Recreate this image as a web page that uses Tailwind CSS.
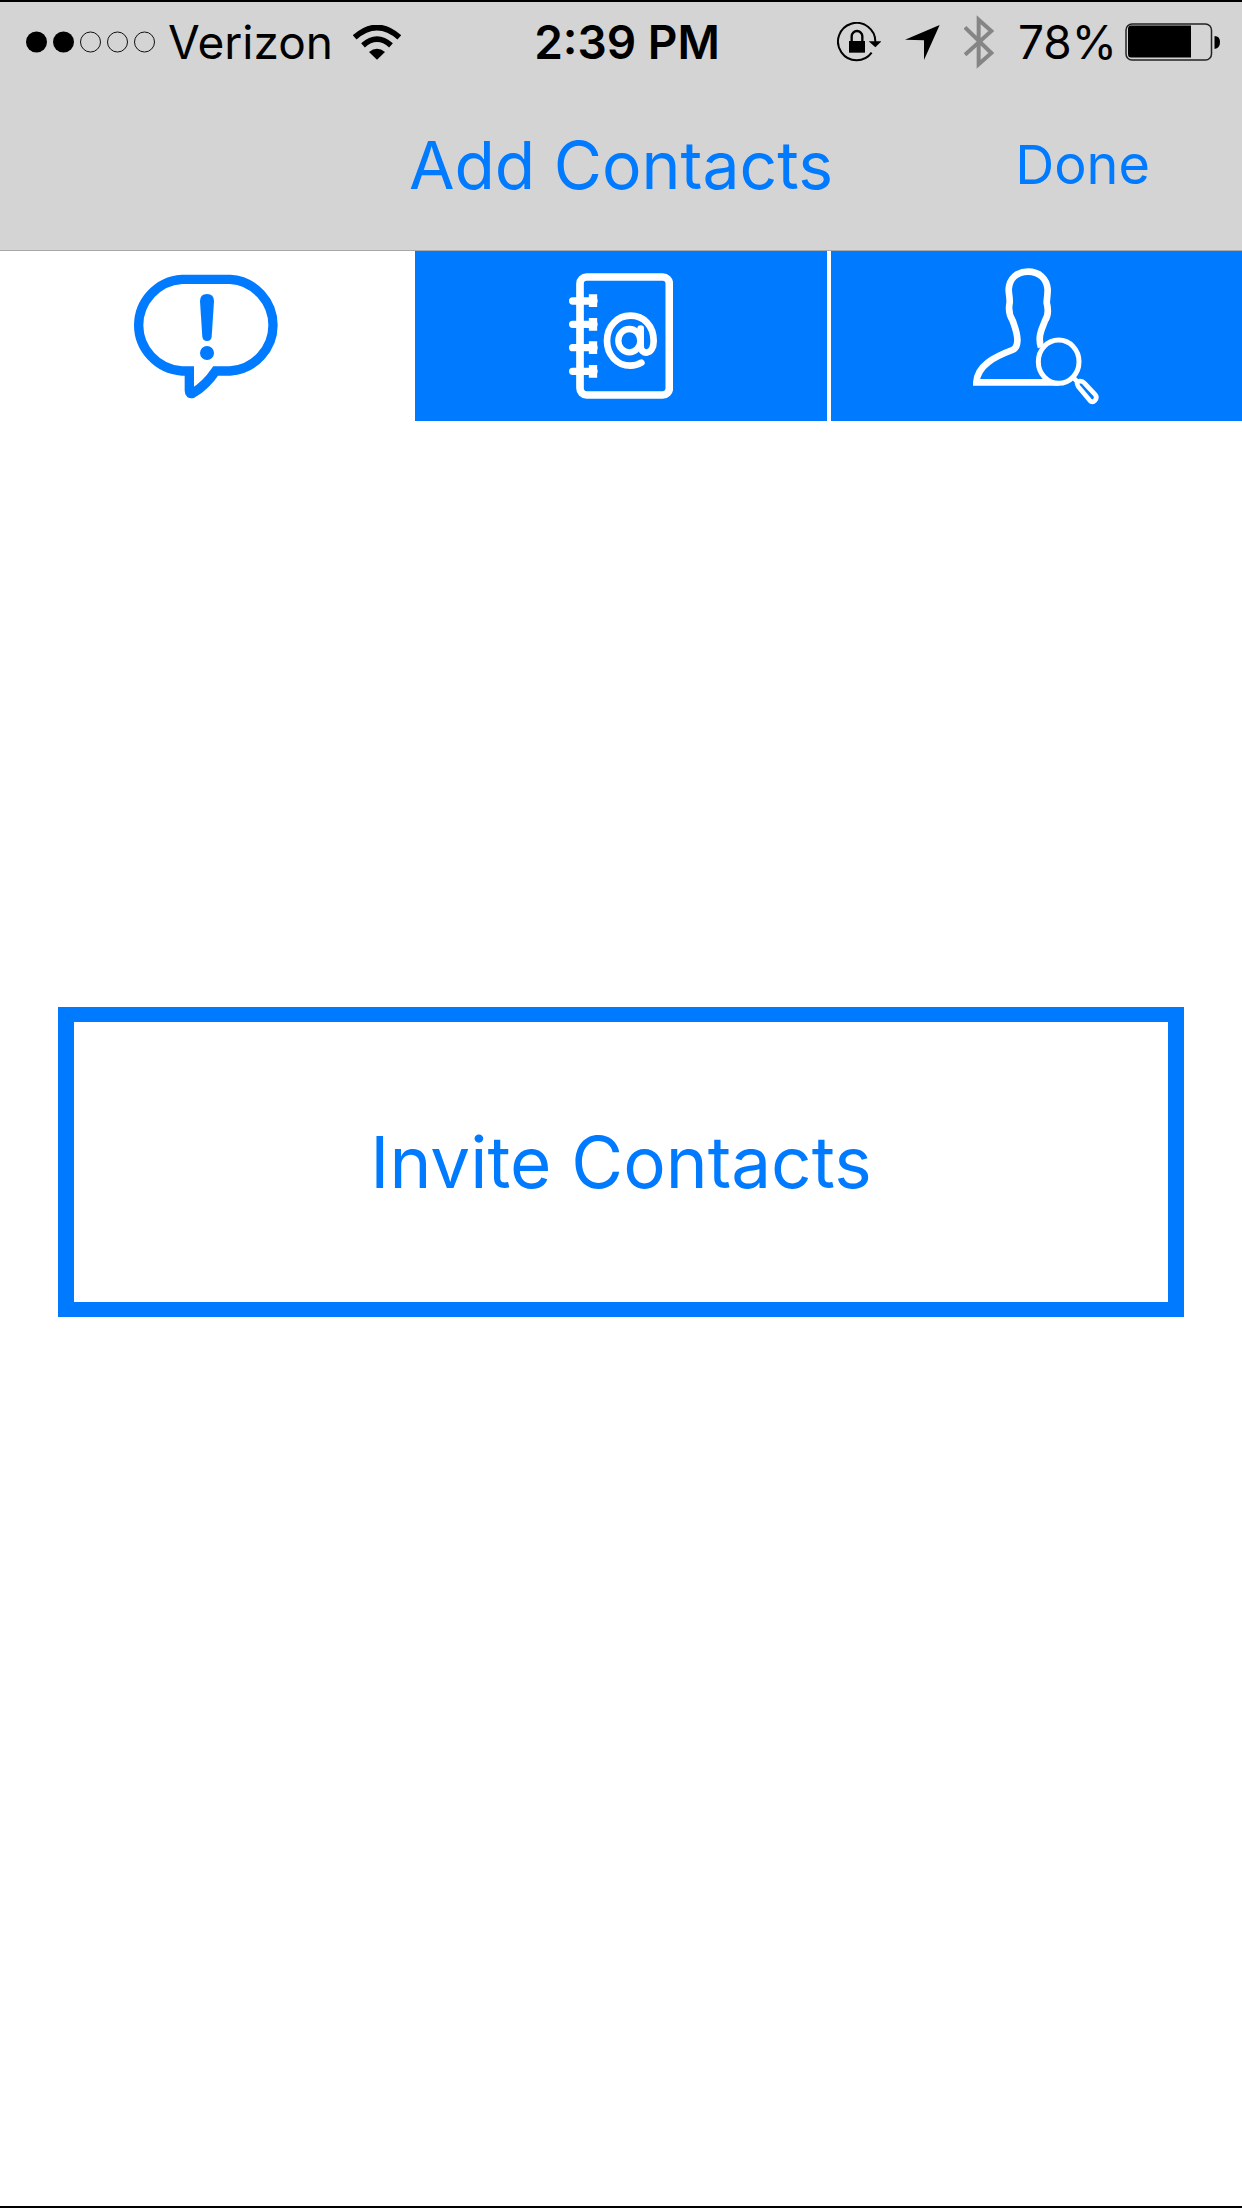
<!DOCTYPE html>
<html lang="en">
<head>
<meta charset="utf-8">
<meta name="viewport" content="width=device-width, initial-scale=1">
<title>Add Contacts</title>
<script src="https://cdn.jsdelivr.net/npm/@tailwindcss/browser@4"></script>
</head>
<body class="flex min-h-screen flex-col border-y-2 border-black bg-white font-['Inter',sans-serif]">
  <header class="border-b border-[#a9a9a9] bg-[#d4d4d4]">
    <!-- Status bar -->
    <div class="grid h-20 grid-cols-[1fr_auto_1fr] items-center pr-[22px] pl-[26px] text-[46px] leading-20 text-black">
      <div class="flex items-center">
        <svg class="h-[22px] w-[130px]" viewBox="0 0 260 44" role="img" aria-label="Signal: 2 of 5">
          <circle cx="21" cy="22" r="21"/><circle cx="75" cy="22" r="21"/>
          <g fill="none" stroke="#111" stroke-width="2"><circle cx="129" cy="22" r="20"/><circle cx="183" cy="22" r="20"/><circle cx="237" cy="22" r="20"/></g>
        </svg>
        <span class="ml-3">Verizon</span>
        <svg class="ml-5 h-[35px] w-[48px]" viewBox="0 0 144 105" role="img" aria-label="Wi-Fi">
          <path d="M5 37Q72-22 139 37" fill="none" stroke="#000" stroke-width="17"/>
          <path d="M30 61Q72 24 114 61" fill="none" stroke="#000" stroke-width="17"/>
          <path d="M48 81Q72 61 96 81L72 104Z"/>
        </svg>
      </div>
      <time class="pl-2 font-semibold">2:39 PM</time>
      <div class="flex items-center justify-end">
        <svg class="h-[40px] w-[44px]" viewBox="0 0 132 120" role="img" aria-label="Rotation lock">
          <path d="M104 92A56 56 0 1 1 115 60" fill="none" stroke="#000" stroke-width="6"/>
          <path d="M95 58h38l-18 18Z"/>
          <rect x="36" y="57" width="48" height="35"/>
          <path d="M44 60V43a16 16 0 0 1 32 0v17" fill="none" stroke="#000" stroke-width="7"/>
        </svg>
        <svg class="ml-6 h-[35px] w-[35px]" viewBox="0 0 105 105" role="img" aria-label="Location">
          <path d="M104 0L57 105V46L0 44Z"/>
        </svg>
        <svg class="ml-6 h-[54px] w-[30px]" viewBox="0 0 90 162" role="img" aria-label="Bluetooth">
          <path d="M3 37L82 114L44 148V14L82 48L3 119" fill="none" stroke="#858585" stroke-width="12"/>
        </svg>
        <span class="ml-6">78%</span>
        <svg class="ml-2 h-[38px] w-[95px]" viewBox="0 0 190 76" role="img" aria-label="Battery">
          <rect x="2" y="2" width="171" height="72" rx="12" fill="none" stroke="#222" stroke-width="3"/>
          <path d="M12 5H132V69H12Q6 69 6 62V12Q6 5 12 5Z"/>
          <path d="M179 26Q190 26 190 38T179 52Z"/>
        </svg>
      </div>
    </div>
    <!-- Navigation bar -->
    <nav class="grid h-[168px] grid-cols-[1fr_auto_1fr] items-start pt-[43px] text-[#007aff]">
      <h1 class="col-start-2 text-[66px] leading-20">Add Contacts</h1>
      <button type="button" class="mr-[92px] justify-self-end text-[54px] leading-20">Done</button>
    </nav>
  </header>

  <div role="tablist" aria-label="Contact sources" class="grid h-[170px] grid-cols-3 gap-1">
    <button type="button" role="tab" aria-selected="true" aria-label="Invite" class="flex items-center justify-center bg-white">
      <svg class="h-[125px] w-[144px]" viewBox="69 102 432 375" fill="none" stroke="#007aff" stroke-width="28" aria-hidden="true">
        <path d="M213 118H357C432 122 486 187 486 256S432 388 357 393H314Q284 437 245 460Q235 464 235 452V393H213C138 388 83 325 83 256S138 122 213 118Z"/>
        <path d="M267 184Q267 162 288 162T309 184L302 290Q300 303 288 303T274 290Z" fill="#007aff" stroke="none"/>
        <circle cx="288" cy="339" r="21" fill="#007aff" stroke="none"/>
      </svg>
    </button>
    <button type="button" role="tab" aria-selected="false" aria-label="Address book" class="flex items-center justify-center bg-[#007aff]">
      <svg class="h-[126px] w-[104px]" viewBox="90 97 312 378" fill="none" stroke="#fff" aria-hidden="true">
        <rect x="123" y="109" width="268" height="354" rx="20" stroke-width="23"/>
        <path d="M101 181H165M101 251H165M101 321H165M101 392H165" stroke-width="22" stroke-linecap="round"/>
        <path d="M162 161v38M162 232v38M162 302v38M162 373v38" stroke-width="25"/>
        <ellipse cx="271" cy="300" rx="33" ry="35" stroke-width="19"/>
        <path d="M305 264V316C305 344 344 345 344 301C344 256 315 225 274 225C234 225 204 258 204 300C204 342 234 375 274 375Q292 375 307 366" stroke-width="20" stroke-linecap="round"/>
      </svg>
    </button>
    <button type="button" role="tab" aria-selected="false" aria-label="Find people" class="flex items-center justify-center bg-[#007aff]">
      <svg class="h-[137px] w-[126px]" viewBox="100 84 378 411" fill="none" stroke="#fff" stroke-width="17" aria-hidden="true">
        <path d="M304 322C292 285 311 259 316 242C327 226 326 207 321 188C322 174 324 162 324 148C321 115 298 95 265 95S209 115 207 148C207 162 211 174 210 188C206 207 209 226 219 242C226 262 235 283 233 304Q232 324 218 330C165 350 113 376 110 427H357" stroke-width="20"/>
        <ellipse cx="357" cy="365" rx="61" ry="65" fill="#007aff" stroke-width="15"/>
        <path d="M399 411L418 430" stroke-width="14"/>
        <path d="M416 440Q408 426 417 424Q428 422 435 430L466 463Q474 472 466 481Q458 490 450 481Z" stroke-width="14"/>
      </svg>
    </button>
  </div>

  <main class="flex-1 px-[58px] pt-[586px] pb-20">
    <button type="button" class="w-full border-x-16 border-y-15 border-[#007aff] bg-white py-24 text-[71px] leading-22 text-[#007aff]">Invite Contacts</button>
  </main>
</body>
</html>
